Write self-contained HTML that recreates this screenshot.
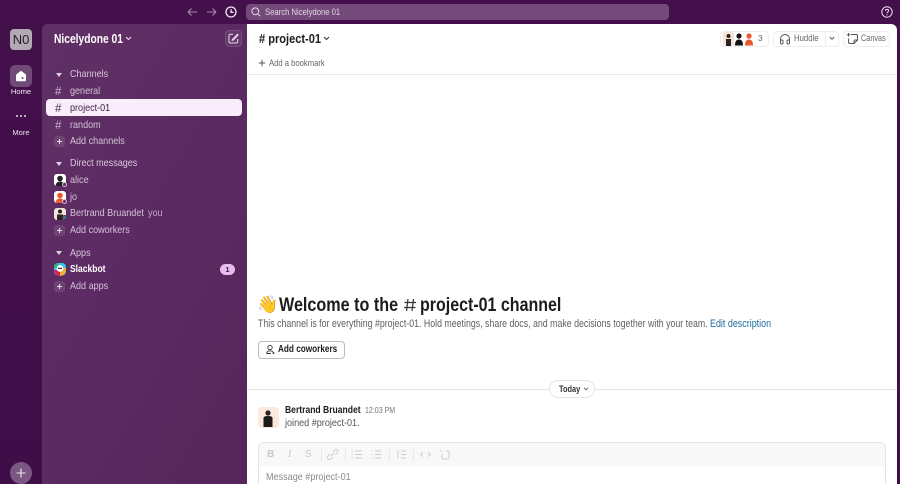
<!DOCTYPE html>
<html><head><meta charset="utf-8"><style>
html,body{margin:0;padding:0;width:900px;height:484px;overflow:hidden;background:#40104a}
#w{position:absolute;left:0;top:0;width:900px;height:484px;overflow:hidden;background:linear-gradient(180deg,#44104c 0,#3f0d47 100%);font-family:"Liberation Sans",sans-serif;filter:blur(.3px)}
.a{position:absolute;white-space:nowrap;transform:scaleX(var(--x,1));transform-origin:0 0}
svg{position:absolute;display:block}
#side{position:absolute;left:42px;top:24px;width:205px;height:460px;background:linear-gradient(120deg,#5f3066 0,#5c2a63 50%,#552659 100%);border-radius:6px 0 0 0}
#main{position:absolute;left:247px;top:24px;width:650px;height:460px;background:#fff;border-radius:0 6px 0 0}
.s{color:#d5c3d8;font-size:10.400px;line-height:14px;height:14px;--x:.87}
.h{color:#d8c8da;font-size:10.400px;line-height:14px;height:14px;left:70px;--x:.87}
.tri{position:absolute;left:56px;width:0;height:0;border-left:3px solid transparent;border-right:3px solid transparent;border-top:4px solid #ddd0e0}
.hs{position:absolute;left:55px;font-size:11.500px;line-height:14px;color:#c9b4cd}
.plus{position:absolute;left:54px;width:11px;height:11px;border-radius:3px;background:linear-gradient(#e5d9e7,#e5d9e7) center/5px 1px no-repeat,linear-gradient(#e5d9e7,#e5d9e7) center/1px 5px no-repeat,#6e4475}
.av{position:absolute;left:54px;width:12px;height:12px;border-radius:3px;background:#fff;overflow:hidden}
.st{position:absolute;left:62px;width:5px;height:5px;border-radius:50%;background:#5a2a62;border:1px solid #d5c3d8;box-sizing:border-box}
.btn{position:absolute;border:1px solid #efedef;border-radius:4px;box-sizing:border-box;background:#fff}
.ib{position:absolute;top:450px;font-size:10px;line-height:10px;color:#c9c9c9;text-align:center}
.dv{position:absolute;top:449px;width:1px;height:12px;background:#e8e8e8}
</style></head><body><div id="w">

<!-- top bar icons -->
<svg style="left:187px;top:6px" width="30" height="12" viewBox="0 0 30 12" fill="none" stroke="#a78bad" stroke-width="1.100"><path d="M1 6h9M1 6l3.500-3.500M1 6l3.500 3.500"/><path d="M29 6h-9M29 6l-3.500-3.500M29 6l-3.500 3.500"/></svg>
<svg style="left:225px;top:6px" width="12" height="12" viewBox="0 0 12 12" fill="none" stroke="#f0e6f1" stroke-width="1.300"><circle cx="6" cy="6" r="5"/><path d="M6 3.200V6.400H8.600"/></svg>
<div class="a" style="left:246px;top:4px;width:423px;height:16px;background:#734a79;border-radius:4px"></div>
<svg style="left:251px;top:7px" width="10" height="10" viewBox="0 0 10 10" fill="none" stroke="#e6dbe8" stroke-width="1"><circle cx="4.300" cy="4.300" r="3.400"/><path d="M6.800 6.800L9.200 9.200"/></svg>
<div class="a" style="left:265px;top:5px;font-size:9.400px;line-height:14px;color:#e2d6e4;--x:.82">Search Nicelydone 01</div>
<svg style="left:881px;top:6px" width="12" height="12" viewBox="0 0 12 12" fill="none" stroke="#eee5ef" stroke-width="1"><circle cx="6" cy="6" r="5.200"/><path d="M4.400 4.700C4.400 3 7.600 3 7.600 4.700 7.600 5.900 6 5.800 6 7.200"/><path d="M6 8.400v1"/></svg>

<!-- rail -->
<div class="a" style="left:10px;top:29px;width:22px;height:21px;background:#b2aab3;border-radius:4px;color:#2d1830;font-size:13px;line-height:21px;text-align:center">N0</div>
<div class="a" style="left:10px;top:65px;width:22px;height:22px;background:#704a77;border-radius:5px"></div>
<svg style="left:15px;top:70px" width="12" height="12" viewBox="0 0 12 12"><path d="M6 .8L11 4.600V10.200Q11 11.200 10 11.200H2Q1 11.200 1 10.200V4.600Z" fill="#fff"/><circle cx="7.500" cy="8" r="1" fill="#704a77"/></svg>
<div class="a" style="left:0;width:42px;top:87px;text-align:center;color:#f2ebf3;font-size:7.600px;line-height:10px">Home</div>
<svg style="left:15px;top:114px" width="12" height="4" viewBox="0 0 12 4" fill="#e9dfea"><circle cx="2" cy="2" r="1"/><circle cx="6" cy="2" r="1"/><circle cx="10" cy="2" r="1"/></svg>
<div class="a" style="left:0;width:42px;top:128px;text-align:center;color:#e9dfea;font-size:7.600px;line-height:10px">More</div>
<div class="a" style="left:10px;top:462px;width:22px;height:22px;background:#7b5881;border-radius:50%"></div>
<svg style="left:15px;top:467px" width="12" height="12" viewBox="0 0 12 12" stroke="#f0e9f1" stroke-width="1.100"><path d="M6 1.500v9M1.500 6h9"/></svg>

<!-- sidebar -->
<div id="side"></div>
<div class="a" style="left:53.500px;top:31px;color:#fff;font-weight:bold;font-size:12.500px;line-height:16px;--x:.82">Nicelydone 01</div>
<svg style="left:125px;top:36px" width="7" height="5" viewBox="0 0 7 5" fill="none" stroke="#efe6f0" stroke-width="1"><path d="M1 1l2.500 2.500L6 1"/></svg>
<div class="a" style="left:225px;top:30px;width:17px;height:17px;background:#65386b;border:1px solid #764f7c;border-radius:4px;box-sizing:border-box"></div>
<svg style="left:227px;top:32px" width="13" height="13" viewBox="0 0 13 13" fill="none" stroke="#e8dcea" stroke-width="1"><path d="M6 2.300H3.400Q2 2.300 2 3.700V9.600Q2 11 3.400 11H9.300Q10.700 11 10.700 9.600V7"/><path d="M5.400 7.600L10.400 2.200 11.200 3 6.200 8.200 5.200 8.400Z"/></svg>

<div class="tri" style="top:73px"></div><div class="a h" style="top:68px">Channels</div>
<div class="hs" style="top:85px">#</div><div class="a s" style="left:70px;top:85px">general</div>
<div class="a" style="left:46px;top:99px;width:196px;height:17px;background:#f9edfb;border-radius:4px"></div>
<div class="hs" style="top:102px;color:#4b2a50">#</div><div class="a s" style="left:70px;top:102px;color:#3d1b44">project-01</div>
<div class="hs" style="top:119px">#</div><div class="a s" style="left:70px;top:119px">random</div>
<div class="plus" style="top:136px"></div><div class="a s" style="left:70px;top:135px">Add channels</div>

<div class="tri" style="top:162px"></div><div class="a h" style="top:157px">Direct messages</div>
<div class="av" style="top:174px"><svg style="left:0;top:0" width="12" height="12"><circle cx="6" cy="4.500" r="2.800" fill="#222"/><path d="M1.500 12Q2 7.500 6 7.500T10.500 12Z" fill="#222"/></svg></div><div class="st" style="top:182px"></div>
<div class="a s" style="left:70px;top:174px">alice</div>
<div class="av" style="top:191px"><svg style="left:0;top:0" width="12" height="12"><circle cx="6" cy="4.500" r="2.800" fill="#e9592c"/><path d="M1.500 12Q2 7.500 6 7.500T10.500 12Z" fill="#e9592c"/></svg></div><div class="st" style="top:199px"></div>
<div class="a s" style="left:70px;top:191px">jo</div>
<div class="av" style="top:208px;background:#f5e4da"><svg style="left:0;top:0" width="12" height="12"><circle cx="6" cy="3.500" r="2" fill="#2a2320"/><path d="M3 12V6.500H9V12Z" fill="#2a2320"/></svg></div><div class="st" style="top:215px;background:#2f8a76;border-color:#5a2a62"></div>
<div class="a s" style="left:70px;top:207px">Bertrand Bruandet</div><div class="a s" style="left:148px;top:207px;color:#bfa9c3">you</div>
<div class="plus" style="top:225px"></div><div class="a s" style="left:70px;top:224px">Add coworkers</div>

<div class="tri" style="top:251px"></div><div class="a h" style="top:247px">Apps</div>
<svg style="left:53px;top:263px" width="13" height="13" viewBox="0 0 13 13"><rect x="1" width="12" height="12.500" rx="4" fill="#36c5f0"/><path d="M1 7a6 6 0 0 0 6 6V7Z" fill="#e01e5a"/><path d="M7 13a6 6 0 0 0 6-6V5H7Z" fill="#ecb22e"/><path d="M1 3Q1 0 6 0L4 5H1Z" fill="#2eb67d"/><circle cx="7" cy="5.500" r="3.400" fill="#fff"/><rect x="5" y="4.800" width="4" height="1.200" fill="#333"/></svg>
<div class="a s" style="left:70px;top:263px;color:#fff;font-weight:bold;--x:.82">Slackbot</div>
<div class="a" style="left:220px;top:264px;width:15px;height:11px;background:#e6bdec;border-radius:6px;text-align:center;color:#3f1a45;font-size:7.500px;font-weight:bold;line-height:11px">1</div>
<div class="plus" style="top:281px"></div><div class="a s" style="left:70px;top:280px">Add apps</div>

<!-- main -->
<div id="main"></div>
<div class="a" style="left:259px;top:30px;font-size:13px;font-weight:bold;line-height:17px;color:#1d1c1d;--x:.85"># project-01</div>
<svg style="left:323px;top:36px" width="7" height="5" viewBox="0 0 7 5" fill="none" stroke="#333" stroke-width="1"><path d="M1 1l2.500 2.500L6 1"/></svg>

<div class="btn" style="left:720px;top:31px;width:49px;height:16px"></div>
<div class="a" style="left:723px;top:32px;width:11px;height:14px;background:#f6e4d9;border-radius:2px"></div>
<svg style="left:723px;top:32px" width="34" height="14" viewBox="0 0 34 14"><circle cx="5.500" cy="4" r="2" fill="#2b2320"/><path d="M3 14V7H8V14Z" fill="#2b2320"/><circle cx="16" cy="4" r="2.600" fill="#111"/><path d="M12 13.500Q12 7.500 16 7.500T20 13.500Z" fill="#111"/><circle cx="26" cy="4" r="2.600" fill="#e9592c"/><path d="M22 13.500Q22 7.500 26 7.500T30 13.500Z" fill="#e9592c"/></svg>
<div class="a" style="left:758px;top:32px;font-size:8.500px;line-height:13px;color:#666">3</div>
<div class="btn" style="left:773px;top:31px;width:66px;height:16px"></div>
<div class="a" style="left:825px;top:31px;width:1px;height:16px;background:#efedef"></div>
<svg style="left:779px;top:33px" width="12" height="12" viewBox="0 0 12 12" fill="none" stroke="#555" stroke-width="1"><path d="M1.500 8V6A4.500 4.500 0 0 1 10.500 6V8"/><rect x="1.500" y="7" width="2.500" height="4" rx="1"/><rect x="8" y="7" width="2.500" height="4" rx="1"/></svg>
<div class="a" style="left:793.500px;top:32px;font-size:8.800px;line-height:13px;color:#666;--x:.88">Huddle</div>
<svg style="left:829px;top:36px" width="6" height="5" viewBox="0 0 6 5" fill="none" stroke="#555" stroke-width=".9"><path d="M.8 1l2.200 2.200L5.200 1"/></svg>
<div class="btn" style="left:843px;top:31px;width:47px;height:16px"></div>
<svg style="left:846px;top:32px" width="13" height="13" viewBox="0 0 13 13" fill="none" stroke="#555" stroke-width="1"><path d="M5 2.500H10Q11.500 2.500 11.500 4V8L8 11.500H4Q2.500 11.500 2.500 10V6.500"/><path d="M8 11.500V9Q8 8 9 8H11.500"/><path d="M2.500 1v3.500M.8 2.700h3.500"/></svg>
<div class="a" style="left:860.500px;top:32px;font-size:8.800px;line-height:13px;color:#666;--x:.83">Canvas</div>

<svg style="left:258px;top:59px" width="8" height="8" viewBox="0 0 8 8" stroke="#555" stroke-width="1"><path d="M4 .8v6.400M.8 4h6.400"/></svg>
<div class="a" style="left:268.500px;top:57px;font-size:8.800px;line-height:13px;color:#666;--x:.87">Add a bookmark</div>
<div class="a" style="left:247px;top:74px;width:650px;height:1px;background:#e8e8e8"></div>

<div class="a" style="left:257px;top:293px;font-size:17px;line-height:24px">👋</div>
<div class="a" style="left:279px;top:293.500px;font-size:19px;font-weight:bold;line-height:24px;color:#1d1c1d;--x:.85">Welcome to the</div>
<svg style="left:403px;top:297px" width="14" height="16" viewBox="0 0 14 16" fill="none" stroke="#333" stroke-width="1.200"><path d="M5 2L3.500 14M10.500 2L9 14M1.500 5.500H13M1 10.500H12.500"/></svg>
<div class="a" style="left:420px;top:293.500px;font-size:19px;font-weight:bold;line-height:24px;color:#1d1c1d;--x:.842">project-01 channel</div>
<div class="a" style="left:258px;top:316.500px;font-size:10.600px;line-height:15px;color:#616061;--x:.831">This channel is for everything #project-01. Hold meetings, share docs, and make decisions together with your team.</div>
<div class="a" style="left:710px;top:316.500px;font-size:10.600px;line-height:15px;color:#1f6d9c;--x:.843">Edit description</div>

<div class="btn" style="left:258px;top:341px;width:87px;height:18px;border-color:#bdbcbd;border-radius:4px"></div>
<svg style="left:265px;top:344px" width="11" height="11" viewBox="0 0 11 11" fill="none" stroke="#333" stroke-width=".9"><circle cx="5" cy="3.500" r="2.200"/><path d="M1.500 9.500Q2 6.800 5 6.800 7 6.800 8 8M1.500 9.500H6M8.500 8v2M7.500 9h2"/></svg>
<div class="a" style="left:277.500px;top:343px;font-size:10px;font-weight:bold;line-height:14px;color:#1d1c1d;--x:.82">Add coworkers</div>

<div class="a" style="left:247px;top:389px;width:650px;height:1px;background:#e5e5e5"></div>
<div class="a" style="left:549px;top:380px;width:46px;height:18px;background:#fff;border:1px solid #e5e5e5;border-radius:9px;box-sizing:border-box"></div>
<div class="a" style="left:559px;top:382px;font-size:8.800px;font-weight:bold;line-height:14px;color:#333;--x:.84">Today</div>
<svg style="left:583px;top:387px" width="6" height="4" viewBox="0 0 6 4" fill="none" stroke="#555" stroke-width=".8"><path d="M1 .8l2 2 2-2"/></svg>

<div class="a" style="left:258px;top:407px;width:21px;height:21px;background:#fbe9dd;border-radius:4px"></div>
<svg style="left:258px;top:407px" width="21" height="21" viewBox="0 0 21 21"><circle cx="10" cy="6" r="2.600" fill="#2b2320"/><path d="M5.500 20V11Q5.500 9 10 9T14.500 11V20Z" fill="#1c1a1a"/></svg>
<div class="a" style="left:284.500px;top:404px;font-size:10.200px;font-weight:bold;line-height:14px;color:#1d1c1d;--x:.84">Bertrand Bruandet</div>
<div class="a" style="left:364.500px;top:405px;font-size:8px;line-height:12px;color:#777;--x:.88">12:03 PM</div>
<div class="a" style="left:284.500px;top:417px;font-size:10.200px;line-height:14px;color:#555;--x:.89">joined #project-01.</div>

<div class="a" style="left:258px;top:442px;width:628px;height:42px;border:1px solid #e4e4e4;border-bottom:0;border-radius:6px 6px 0 0;box-sizing:border-box;background:#fff"></div>
<div class="a" style="left:259px;top:443px;width:626px;height:23px;background:#f8f8f8;border-radius:5px 5px 0 0"></div>
<div class="ib" style="left:267px;font-weight:bold">B</div>
<div class="ib" style="left:288px;font-style:italic;font-family:'Liberation Serif',serif">I</div>
<div class="ib" style="left:305px">S</div>
<div class="dv" style="left:321px"></div><div class="dv" style="left:345px"></div><div class="dv" style="left:389px"></div><div class="dv" style="left:413px"></div>
<svg style="left:260px;top:448px" width="200" height="13" viewBox="0 0 200 13" fill="none" stroke="#cdcdcd" stroke-width="1"><path d="M71 8l3-3M70 6l-2 2q-1.500 2 0 3t3 0l2-2M73 4l2-2q1.500-1 2.500 0t0 2.500l-2 2"/><path d="M95 3h7M95 6.500h7M95 10h7M91.500 3h1.500M91.500 6.500h1.500M91.500 10h1.500"/><path d="M115 3h6M115 6.500h6M115 10h6M111.500 3h1M111.500 6.500h1M111.500 10h1"/><path d="M141 3h5M141 6.500h5M141 10h5M138 2.500v8"/><path d="M163 4.500l-2.500 2 2.500 2M168 4.500l2.500 2-2.500 2"/><path d="M181 4v-2M186 3h2q1 0 1 1v5q0 2-2 2h-3q-2 0-2-2V6"/></svg>
<div class="a" style="left:266px;top:470.500px;font-size:10.200px;line-height:14px;color:#8a8a8a;--x:.89">Message #project-01</div>

</div></body></html>
